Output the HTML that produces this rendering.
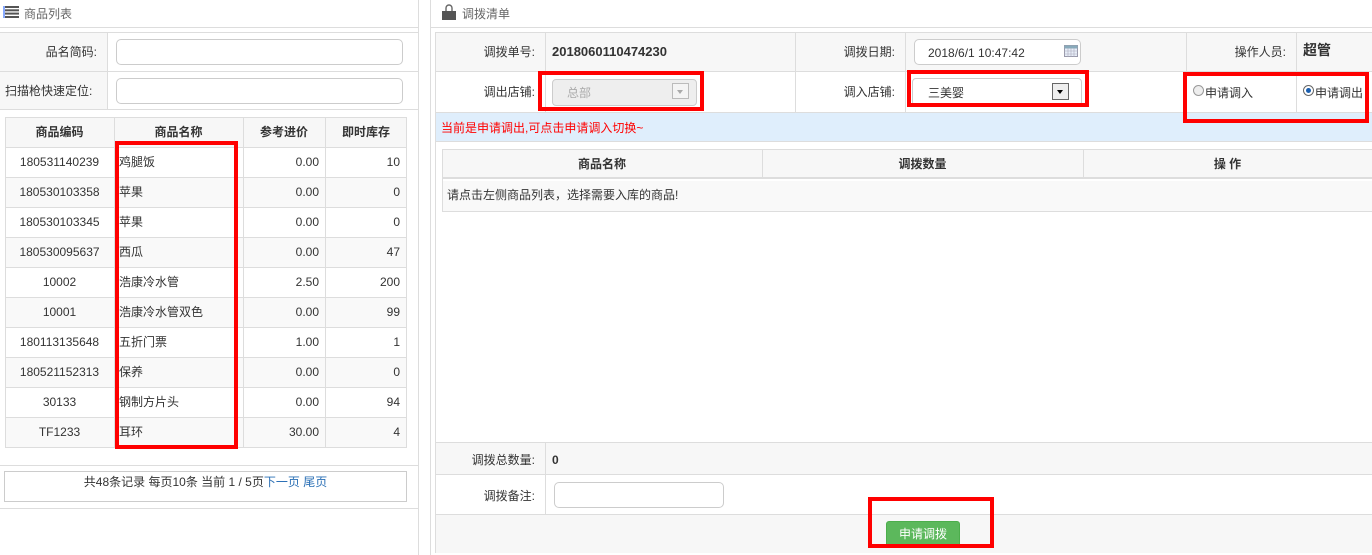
<!DOCTYPE html>
<html><head><meta charset="utf-8"><style>
*{margin:0;padding:0;box-sizing:border-box}
body{width:1372px;height:555px;background:#fff;font-family:"Liberation Sans","Noto Sans CJK SC",sans-serif;font-size:12px;color:#333;position:relative;overflow:hidden}
.a{position:absolute}
.t{position:absolute;white-space:nowrap;line-height:14px}
.hl{position:absolute;height:1px;background:#ddd}
.vl{position:absolute;width:1px;background:#ddd}
.red{position:absolute;border:4px solid #f00;z-index:10}
.inp{position:absolute;background:#fff;border:1px solid #ccc;border-radius:5px}
.r{text-align:right}
.c{text-align:center}
</style></head><body>
<!-- left panel -->
<div class="vl" style="left:418px;top:0;height:555px"></div>
<svg class="a" style="left:3px;top:6px" width="16" height="12"><g fill="#555"><rect y="0" width="16" height="2"/><rect y="3.3" width="16" height="2"/><rect y="6.6" width="16" height="2"/><rect y="10" width="16" height="2"/></g><g fill="#8af"><rect y="0" width="2" height="12"/></g></svg>
<div class="t" style="left:24px;top:7px;color:#666">商品列表</div>
<div class="hl" style="left:0;top:27px;width:418px"></div>
<div class="a" style="left:0;top:32px;width:418px;height:78px;background:#f7f7f7;border-top:1px solid #ddd;border-bottom:1px solid #ddd"></div>
<div class="a" style="left:107px;top:33px;width:311px;height:76px;background:#fff"></div>
<div class="vl" style="left:107px;top:32px;height:78px"></div>
<div class="hl" style="left:0;top:71px;width:418px"></div>
<div class="t r" style="left:0;top:45px;width:97px">品名简码:</div>
<div class="t" style="left:5px;top:84px">扫描枪快速定位:</div>
<div class="inp" style="left:116px;top:39px;width:287px;height:26px"></div>
<div class="inp" style="left:116px;top:78px;width:287px;height:26px"></div>
<!-- product table -->
<div class="a" style="left:5px;top:117px;width:402px;height:331px;border:1px solid #ddd"></div>
<div class="a" style="left:6px;top:118px;width:400px;height:29px;background:#f7f7f7"></div>
<div class="t c" style="left:5px;top:125px;width:109px;font-weight:bold">商品编码</div>
<div class="t c" style="left:114px;top:125px;width:129px;font-weight:bold">商品名称</div>
<div class="t c" style="left:243px;top:125px;width:82px;font-weight:bold">参考进价</div>
<div class="t c" style="left:325px;top:125px;width:82px;font-weight:bold">即时库存</div>
<div class="a" style="left:6px;top:177px;width:400px;height:30px;background:#f9f9f9"></div>
<div class="a" style="left:6px;top:237px;width:400px;height:30px;background:#f9f9f9"></div>
<div class="a" style="left:6px;top:297px;width:400px;height:30px;background:#f9f9f9"></div>
<div class="a" style="left:6px;top:357px;width:400px;height:30px;background:#f9f9f9"></div>
<div class="a" style="left:6px;top:417px;width:400px;height:30px;background:#f9f9f9"></div>
<div class="hl" style="left:5px;top:147px;width:402px"></div>
<div class="hl" style="left:5px;top:177px;width:402px"></div>
<div class="hl" style="left:5px;top:207px;width:402px"></div>
<div class="hl" style="left:5px;top:237px;width:402px"></div>
<div class="hl" style="left:5px;top:267px;width:402px"></div>
<div class="hl" style="left:5px;top:297px;width:402px"></div>
<div class="hl" style="left:5px;top:327px;width:402px"></div>
<div class="hl" style="left:5px;top:357px;width:402px"></div>
<div class="hl" style="left:5px;top:387px;width:402px"></div>
<div class="hl" style="left:5px;top:417px;width:402px"></div>
<div class="vl" style="left:114px;top:117px;height:331px"></div>
<div class="vl" style="left:243px;top:117px;height:331px"></div>
<div class="vl" style="left:325px;top:117px;height:331px"></div>
<div class="t c" style="left:5px;top:155px;width:109px">180531140239</div><div class="t" style="left:119px;top:155px">鸡腿饭</div><div class="t r" style="left:243px;top:155px;width:76px">0.00</div><div class="t r" style="left:325px;top:155px;width:75px">10</div>
<div class="t c" style="left:5px;top:185px;width:109px">180530103358</div><div class="t" style="left:119px;top:185px">苹果</div><div class="t r" style="left:243px;top:185px;width:76px">0.00</div><div class="t r" style="left:325px;top:185px;width:75px">0</div>
<div class="t c" style="left:5px;top:215px;width:109px">180530103345</div><div class="t" style="left:119px;top:215px">苹果</div><div class="t r" style="left:243px;top:215px;width:76px">0.00</div><div class="t r" style="left:325px;top:215px;width:75px">0</div>
<div class="t c" style="left:5px;top:245px;width:109px">180530095637</div><div class="t" style="left:119px;top:245px">西瓜</div><div class="t r" style="left:243px;top:245px;width:76px">0.00</div><div class="t r" style="left:325px;top:245px;width:75px">47</div>
<div class="t c" style="left:5px;top:275px;width:109px">10002</div><div class="t" style="left:119px;top:275px">浩康冷水管</div><div class="t r" style="left:243px;top:275px;width:76px">2.50</div><div class="t r" style="left:325px;top:275px;width:75px">200</div>
<div class="t c" style="left:5px;top:305px;width:109px">10001</div><div class="t" style="left:119px;top:305px">浩康冷水管双色</div><div class="t r" style="left:243px;top:305px;width:76px">0.00</div><div class="t r" style="left:325px;top:305px;width:75px">99</div>
<div class="t c" style="left:5px;top:335px;width:109px">180113135648</div><div class="t" style="left:119px;top:335px">五折门票</div><div class="t r" style="left:243px;top:335px;width:76px">1.00</div><div class="t r" style="left:325px;top:335px;width:75px">1</div>
<div class="t c" style="left:5px;top:365px;width:109px">180521152313</div><div class="t" style="left:119px;top:365px">保养</div><div class="t r" style="left:243px;top:365px;width:76px">0.00</div><div class="t r" style="left:325px;top:365px;width:75px">0</div>
<div class="t c" style="left:5px;top:395px;width:109px">30133</div><div class="t" style="left:119px;top:395px">钢制方片头</div><div class="t r" style="left:243px;top:395px;width:76px">0.00</div><div class="t r" style="left:325px;top:395px;width:75px">94</div>
<div class="t c" style="left:5px;top:425px;width:109px">TF1233</div><div class="t" style="left:119px;top:425px">耳环</div><div class="t r" style="left:243px;top:425px;width:76px">30.00</div><div class="t r" style="left:325px;top:425px;width:75px">4</div>
<div class="red" style="left:115px;top:141px;width:123px;height:308px"></div>
<div class="hl" style="left:0;top:465px;width:418px"></div>
<div class="a" style="left:4px;top:471px;width:403px;height:31px;border:1px solid #ccc"></div>
<div class="t c" style="left:4px;top:475px;width:403px">共48条记录 每页10条 当前 1 / 5页<span style="color:#2a6fb5">下一页 尾页</span></div>
<div class="hl" style="left:0;top:508px;width:418px"></div>

<!-- right panel -->
<div class="vl" style="left:430px;top:0;height:555px"></div>
<svg class="a" style="left:441px;top:4px" width="16" height="16"><path d="M5 7V4a3 3 0 0 1 6 0v3" fill="none" stroke="#666" stroke-width="1.4"/><rect x="1" y="7" width="14" height="9" fill="#555"/></svg>
<div class="t" style="left:462px;top:7px;color:#666">调拨清单</div>
<div class="hl" style="left:431px;top:27px;width:941px"></div>
<div class="a" style="left:435px;top:32px;width:937px;height:521px;border:1px solid #ddd;border-right:none"></div>
<div class="a" style="left:436px;top:33px;width:936px;height:38px;background:#f7f7f7"></div>
<div class="a" style="left:436px;top:72px;width:936px;height:40px;background:#fff"></div>
<div class="hl" style="left:435px;top:71px;width:937px"></div>
<div class="hl" style="left:435px;top:112px;width:937px"></div>
<div class="vl" style="left:545px;top:32px;height:80px"></div>
<div class="vl" style="left:795px;top:32px;height:80px"></div>
<div class="vl" style="left:905px;top:32px;height:80px"></div>
<div class="vl" style="left:1186px;top:32px;height:80px"></div>
<div class="vl" style="left:1296px;top:32px;height:80px"></div>
<div class="t r" style="left:435px;top:45px;width:100px">调拨单号:</div>
<div class="t" style="left:552px;top:45px;font-weight:bold;font-size:13px">2018060110474230</div>
<div class="t r" style="left:795px;top:45px;width:100px">调拨日期:</div>
<div class="inp" style="left:914px;top:39px;width:167px;height:26px"></div>
<div class="t" style="left:928px;top:46px">2018/6/1 10:47:42</div>
<svg class="a" style="left:1064px;top:45px" width="14" height="12"><rect x="0.5" y="0.5" width="13" height="11" fill="#e8eef8" stroke="#99a"/><rect x="0.5" y="0.5" width="13" height="3" fill="#8ab"/><path d="M4 3v9M7 3v9M10 3v9M0 6h14M0 9h14" stroke="#aab" stroke-width=".6"/></svg>
<div class="t r" style="left:1186px;top:45px;width:100px">操作人员:</div>
<div class="t" style="left:1303px;top:43px;font-weight:bold;font-size:14px">超管</div>
<div class="t r" style="left:435px;top:85px;width:100px">调出店铺:</div>
<div class="a" style="left:552px;top:79px;width:145px;height:27px;background:#eee;border:1px solid #ccc;border-radius:4px"></div>
<div class="t" style="left:567px;top:86px;color:#aaa">总部</div>
<div class="a" style="left:672px;top:83px;width:17px;height:16px;border:1px solid #bbb;background:#f4f4f4"></div>
<div class="a" style="left:677px;top:90px;border:3.5px solid transparent;border-top:4px solid #aaa;border-bottom:0"></div>
<div class="red" style="left:538px;top:71px;width:166px;height:40px"></div>
<div class="t r" style="left:795px;top:85px;width:100px">调入店铺:</div>
<div class="a" style="left:912px;top:78px;width:170px;height:28px;background:#fff;border:1px solid #ccc;border-radius:4px"></div>
<div class="t" style="left:928px;top:86px">三美婴</div>
<div class="a" style="left:1052px;top:83px;width:17px;height:17px;border:1px solid #666;background:#eee"></div>
<div class="a" style="left:1057px;top:90px;border:3.5px solid transparent;border-top:4px solid #000;border-bottom:0"></div>
<div class="red" style="left:907px;top:70px;width:182px;height:37px"></div>
<div class="a" style="left:1193px;top:85px;width:11px;height:11px;border-radius:50%;border:1px solid #999;background:#eee"></div>
<div class="t" style="left:1205px;top:86px">申请调入</div>
<div class="a" style="left:1303px;top:85px;width:11px;height:11px;border-radius:50%;border:1px solid #666;background:#fff"></div>
<div class="a" style="left:1306px;top:88px;width:5px;height:5px;border-radius:50%;background:#1a5fb0"></div>
<div class="t" style="left:1315px;top:86px">申请调出</div>
<div class="red" style="left:1183px;top:72px;width:186px;height:51px"></div>
<div class="a" style="left:436px;top:113px;width:936px;height:29px;background:#dfeefc;border-bottom:1px solid #ddd"></div>
<div class="t" style="left:441px;top:121px;color:#f00">当前是申请调出,可点击申请调入切换~</div>
<div class="a" style="left:442px;top:149px;width:930px;height:63px;border:1px solid #ddd;border-right:none"></div>
<div class="a" style="left:443px;top:150px;width:929px;height:29px;background:#f7f7f7;border-bottom:2px solid #ddd"></div>
<div class="vl" style="left:762px;top:149px;height:30px"></div>
<div class="vl" style="left:1083px;top:149px;height:30px"></div>
<div class="t c" style="left:442px;top:157px;width:320px;font-weight:bold">商品名称</div>
<div class="t c" style="left:762px;top:157px;width:321px;font-weight:bold">调拨数量</div>
<div class="t c" style="left:1083px;top:157px;width:289px;font-weight:bold">操 作</div>
<div class="a" style="left:443px;top:181px;width:929px;height:30px;background:#f9f9f9"></div>
<div class="t" style="left:447px;top:188px">请点击左侧商品列表，选择需要入库的商品!</div>
<div class="a" style="left:436px;top:442px;width:936px;height:33px;background:#f7f7f7;border-top:1px solid #ddd;border-bottom:1px solid #ddd"></div>
<div class="vl" style="left:545px;top:442px;height:72px"></div>
<div class="t r" style="left:435px;top:453px;width:100px">调拨总数量:</div>
<div class="t" style="left:552px;top:453px;font-weight:bold">0</div>
<div class="t r" style="left:435px;top:489px;width:100px">调拨备注:</div>
<div class="inp" style="left:554px;top:482px;width:170px;height:26px"></div>
<div class="a" style="left:436px;top:514px;width:936px;height:39px;background:#f7f7f7;border-top:1px solid #ddd"></div>
<div class="a" style="left:886px;top:521px;width:74px;height:27px;background:#5cb85c;border:1px solid #4cae4c;border-radius:3px"></div>
<div class="t c" style="left:886px;top:527px;width:74px;color:#fff">申请调拨</div>
<div class="red" style="left:868px;top:497px;width:126px;height:51px"></div>
</body></html>
